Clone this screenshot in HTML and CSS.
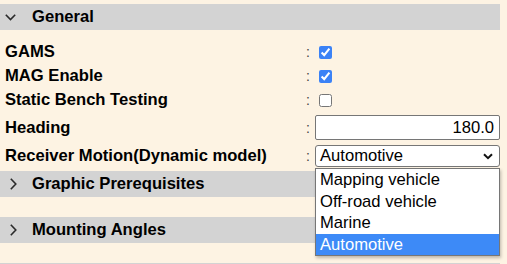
FILE: index.html
```html
<!DOCTYPE html>
<html lang="en">
<head>
    <meta charset="UTF-8">
    <meta name="viewport" content="width=device-width, initial-scale=1.0">
    <title>Receiver Settings</title>
    <link rel="stylesheet" href="styles.css">
</head>
<body>
    <div class="panel">
        <div class="section open">
            <div class="section-head">
                <svg class="chev chev-down" width="11" height="7" viewBox="0 0 11 7"><polyline points="0.8,0.8 5.5,5.6 10.2,0.8" /></svg>
                <span>General</span>
            </div>
            <div class="section-body">
                <div class="row">
                    <span class="name">GAMS</span><span class="sep">:</span>
                    <div class="field"><input type="checkbox" checked></div>
                </div>
                <div class="row">
                    <span class="name">MAG Enable</span><span class="sep">:</span>
                    <div class="field"><input type="checkbox" checked></div>
                </div>
                <div class="row">
                    <span class="name">Static Bench Testing</span><span class="sep">:</span>
                    <div class="field"><input type="checkbox"></div>
                </div>
                <div class="row row-input">
                    <span class="name">Heading</span><span class="sep">:</span>
                    <div class="field"><input class="num" type="text" value="180.0"></div>
                </div>
                <div class="row row-select">
                    <span class="name">Receiver Motion(Dynamic model)</span><span class="sep">:</span>
                    <div class="field select-wrap">
                        <div class="select">
                            <span>Automotive</span>
                            <svg class="select-arrow" width="10" height="7" viewBox="0 0 10 7"><polyline points="1,1.2 5,5.2 9,1.2" /></svg>
                        </div>
                        <ul class="options">
                            <li>Mapping vehicle</li>
                            <li>Off-road vehicle</li>
                            <li>Marine</li>
                            <li class="selected">Automotive</li>
                        </ul>
                    </div>
                </div>
            </div>
        </div>
        <div class="section">
            <div class="section-head">
                <svg class="chev chev-right" width="7" height="12" viewBox="0 0 7 12"><polyline points="0.8,0.8 5.8,6 0.8,11.2" /></svg>
                <span>Graphic Prerequisites</span>
            </div>
        </div>
        <div class="section">
            <div class="section-head">
                <svg class="chev chev-right" width="7" height="12" viewBox="0 0 7 12"><polyline points="0.8,0.8 5.8,6 0.8,11.2" /></svg>
                <span>Mounting Angles</span>
            </div>
        </div>
        <div class="section">
            <div class="section-head"></div>
        </div>
    </div>
</body>
</html>
```

FILE: styles.css
```css
body {
    margin: 0;
    background: #fdf3e3;
    font-family: "Liberation Sans", Arial, sans-serif;
    font-size: 16.6px;
    color: #000;
}
.panel {
    width: 500px;
    padding-top: 4px;
}
.section {
    margin-bottom: 20px;
}
.section.open {
    margin-bottom: 0;
}
.section-head {
    height: 26px;
    background: #d3d3d3;
    display: flex;
    align-items: center;
    padding-left: 5px;
    font-weight: bold;
}
.chev {
    fill: none;
    stroke: #2a2a2a;
    stroke-width: 1.6;
}
.chev-down {
    margin-right: 16px;
    margin-top: 1px;
}
.chev-right {
    margin-left: 5px;
    margin-right: 15px;
}
.section-body {
    padding: 10px 0 2px 0;
}
.row {
    display: grid;
    grid-template-columns: 300px 10px 185px;
    align-items: center;
    height: 24px;
    padding-left: 5px;
}
.row-input {
    height: 31px;
}
.row-select {
    height: 26px;
}
.name {
    font-weight: bold;
    white-space: nowrap;
}
.sep {
    font-size: 14px;
    color: #444;
    padding-left: 1px;
}
.field {
    display: flex;
    align-items: center;
}
input[type="checkbox"] {
    width: 13px;
    height: 13px;
    margin: 0 0 0 4px;
    accent-color: #3b82f6;
}
.num {
    box-sizing: border-box;
    width: 185px;
    height: 25px;
    border: 1px solid #767676;
    border-radius: 2px;
    background: #fff;
    text-align: right;
    padding: 0 5px 0 3px;
    font-family: inherit;
    font-size: 16.6px;
    color: #000;
}
.select-wrap {
    position: relative;
}
.select {
    box-sizing: border-box;
    width: 185px;
    height: 22px;
    border: 1px solid #767676;
    border-radius: 3px;
    background: #fff;
    display: flex;
    align-items: center;
    justify-content: space-between;
    padding: 0 6px 0 4px;
}
.select-arrow {
    fill: none;
    stroke: #111;
    stroke-width: 2;
}
.options {
    position: absolute;
    left: 0;
    top: 23px;
    box-sizing: border-box;
    width: 185px;
    margin: 0;
    padding: 0;
    list-style: none;
    background: #fff;
    border: 1px solid #767676;
    box-shadow: 1px 2px 3px rgba(0, 0, 0, 0.25);
}
.options li {
    height: 21.5px;
    line-height: 21.5px;
    padding-left: 4px;
}
.options li.selected {
    background: #3d8af7;
    color: #fff;
}
```
